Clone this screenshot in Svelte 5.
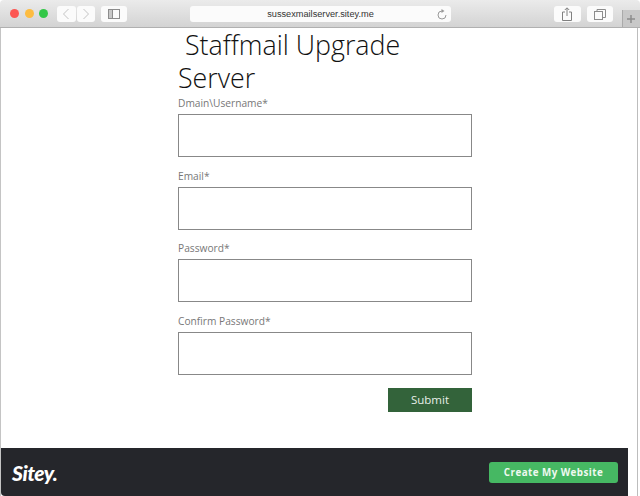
<script>
  const fields = ['Dmain\\Username*', 'Email*', 'Password*', 'Confirm Password*'];
</script>

<div class="window">
  <header class="toolbar">
    <div class="lights">
      <span class="light red"></span>
      <span class="light amber"></span>
      <span class="light green"></span>
    </div>
    <div class="nav">
      <span class="tool half">
        <svg width="8" height="12" viewBox="0 0 8 12"><path d="M6.5 1 1.5 6l5 5" fill="none" stroke="#c4c4c4" stroke-width="1"/></svg>
      </span>
      <span class="tool half">
        <svg width="8" height="12" viewBox="0 0 8 12"><path d="M1.5 1l5 5-5 5" fill="none" stroke="#c4c4c4" stroke-width="1"/></svg>
      </span>
    </div>
    <span class="tool side">
      <svg width="12" height="10" viewBox="0 0 12 10"><rect x=".5" y=".5" width="11" height="9" fill="none" stroke="#8c8c8c"/><path d="M4.500 0v10" stroke="#8c8c8c"/><path d="M1 1h3v8H1z" fill="#c8c8c8"/></svg>
    </span>
    <div class="address">
      <span>sussexmailserver.sitey.me</span>
      <svg class="reload" width="10" height="11" viewBox="0 0 10 11"><path d="M5 2a4 4 0 1 0 4 4" fill="none" stroke="#999"/><path d="M4.500 0l3 2-3 2z" fill="#999"/></svg>
    </div>
    <span class="tool action">
      <svg width="10" height="14" viewBox="0 0 10 14"><path d="M3 5H.5v8.500h9V5H7M5 9V1M2.800 3 5 .8 7.200 3" fill="none" stroke="#808080"/></svg>
    </span>
    <span class="tool action">
      <svg width="12" height="11" viewBox="0 0 12 11"><rect x=".5" y="2.500" width="8" height="8" fill="none" stroke="#8c8c8c"/><path d="M3 2.500V.5h8.500v8H8.500" fill="none" stroke="#8c8c8c"/></svg>
    </span>
    <span class="newtab">
      <svg width="10" height="10" viewBox="0 0 10 10"><path d="M5 1v8M1 5h8" stroke="#8c8c8c" stroke-width="1.500"/></svg>
    </span>
  </header>

  <div class="viewport">
    <div class="page">
      <main class="content">
        <form class="form">
          <h1>&nbsp;Staffmail Upgrade Server</h1>
          {#each fields as field}
            <div class="field">
              <span class="label">{field}</span>
              <div class="input"></div>
            </div>
          {/each}
          <div class="actions"><span class="submit">Submit</span></div>
        </form>
      </main>
      <footer class="footer">
        <span class="logo">Sitey.</span>
        <span class="cta">Create My Website</span>
      </footer>
    </div>
    <div class="gutter"></div>
  </div>
</div>

<style>
  :global(body) {
    margin: 0;
    background: #fff;
  }
  .window {
    width: 640px;
    height: 496px;
    display: flex;
    flex-direction: column;
    overflow: hidden;
    font-family: "Open Sans", sans-serif;
  }
  .toolbar {
    height: 28px;
    flex: none;
    box-sizing: border-box;
    position: relative;
    display: flex;
    align-items: flex-start;
    padding: 6px 0 0 10px;
    background: linear-gradient(#ebebeb, #d3d3d3);
    border-bottom: 1px solid #b0b0b0;
    border-radius: 4px 4px 0 0;
  }
  .lights {
    display: flex;
    gap: 5.500px;
    margin-top: 3px;
    width: 47px;
  }
  .light {
    width: 9px;
    height: 9px;
    border-radius: 50%;
  }
  .red { background: #fc5753; }
  .amber { background: #fdbc40; }
  .green { background: #33c748; }
  .nav {
    display: flex;
    gap: 1px;
    margin-right: 6px;
  }
  .tool {
    height: 16px;
    display: flex;
    align-items: center;
    justify-content: center;
    background: #fbfbfb;
    border-radius: 3px;
  }
  .half { width: 18.500px; }
  .side { width: 26px; margin-right: 63px; }
  .address {
    position: relative;
    width: 261px;
    height: 16px;
    display: flex;
    align-items: center;
    justify-content: center;
    background: #fbfbfb;
    border-radius: 3px;
    font-family: "Liberation Sans", sans-serif;
    font-size: 9.200px;
    color: #333;
  }
  .reload {
    position: absolute;
    right: 4px;
    top: 3px;
  }
  .action {
    width: 26.500px;
    margin-left: 6px;
  }
  .address + .action { margin-left: 103px; }
  .newtab {
    position: absolute;
    right: 0;
    top: 10px;
    width: 18px;
    height: 17px;
    display: flex;
    align-items: center;
    justify-content: center;
    padding-right: 2px;
    background: #c8c8c8;
    border-left: 1px solid #aaa;
    box-sizing: border-box;
  }
  .viewport {
    flex: 1;
    min-height: 0;
    display: flex;
    border-left: 1px solid #c4c4c4;
  }
  .page {
    width: 627px;
    display: flex;
    flex-direction: column;
  }
  .gutter {
    width: 9px;
    border-right: 1px solid #bdbdbd;
    background: #fff;
  }
  .content {
    flex: 1;
    min-height: 0;
    padding-left: 177px;
  }
  .form {
    width: 294px;
    display: flex;
    flex-direction: column;
  }
  h1 {
    margin: 0 0 -1px;
    width: 240px;
    font-size: 26.800px;
    line-height: 33px;
    font-weight: 300;
    color: #111;
  }
  .field {
    display: flex;
    flex-direction: column;
    margin-bottom: 8.500px;
  }
  .label {
    font-size: 10.200px;
    line-height: 21px;
    color: #777;
  }
  .input {
    height: 43px;
    box-sizing: border-box;
    border: 1px solid #888;
    background: #fff;
  }
  .actions {
    display: flex;
    justify-content: flex-end;
    margin-top: 4.500px;
  }
  .submit {
    width: 84px;
    height: 24px;
    display: flex;
    align-items: center;
    justify-content: center;
    background: #33633a;
    color: #e8efe8;
    font-size: 11.500px;
  }
  .footer {
    height: 48px;
    flex: none;
    box-sizing: border-box;
    display: flex;
    align-items: center;
    justify-content: space-between;
    padding: 0 10px 0 11px;
    background: #25262b;
    border-radius: 0 0 0 4px;
  }
  .logo {
    font-family: "Lato", sans-serif;
    font-style: italic;
    font-weight: 900;
    font-size: 21px;
    color: #fff;
    letter-spacing: -0.5px;
  }
  .cta {
    width: 129px;
    height: 21px;
    display: flex;
    align-items: center;
    justify-content: center;
    background: #46b863;
    border-radius: 3px;
    color: #eef8f0;
    font-size: 9.800px;
    font-weight: 700;
    letter-spacing: 0.45px;
  }
</style>
